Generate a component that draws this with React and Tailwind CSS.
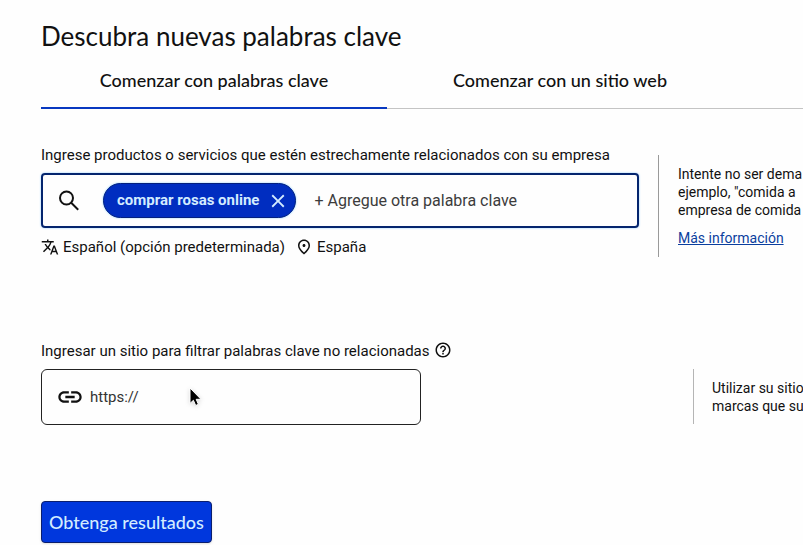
import { useState } from 'react';
import {
    MdClose,
    MdHelpOutline,
    MdLink,
    MdOutlinePlace,
    MdTranslate
} from 'react-icons/md';

const tabs = [
    { id: 'keywords', label: 'Comenzar con palabras clave' },
    { id: 'website', label: 'Comenzar con un sitio web' },
];

const SearchIcon = ({ className }) => (
    <svg viewBox="0 0 24 24" fill="none" stroke="currentColor" strokeWidth="2" aria-hidden="true" className={className}>
        <circle cx="9.5" cy="9" r="6.5" />
        <path d="M14.2 13.7l7 7" />
    </svg>
);

const Tabs = ({ active, onChange }) => (
    <div role="tablist" className="flex border-b border-[#c4c4c4] pr-[70px] font-['Lato',sans-serif]">
        {tabs.map((tab) => (
            <button
                key={tab.id}
                type="button"
                role="tab"
                aria-selected={active === tab.id}
                onClick={() => onChange(tab.id)}
                className={`-mb-px h-14 flex-1 border-b-2 text-lg leading-6 font-medium whitespace-nowrap ${
                    active === tab.id ? 'border-[#0838c0]' : 'border-transparent'
                }`}
            >
                {tab.label}
            </button>
        ))}
    </div>
);

const KeywordField = () => {
    const [keywords, setKeywords] = useState(['comprar rosas online']);

    const removeKeyword = (keyword) => {
        setKeywords(keywords.filter((item) => item !== keyword));
    };

    return (
        <div className="min-w-0 flex-1">
            <label htmlFor="keywords" className="block text-[15px] leading-5 whitespace-nowrap">
                Ingrese productos o servicios que estén estrechamente relacionados con su empresa
            </label>
            <div className="mt-2 flex h-[55px] items-center rounded border-2 border-[#04256e] pr-3 pl-[14px] shadow-[0_0_2px_#7cc4ff]">
                <SearchIcon className="h-6 w-6 shrink-0" />
                <div className="ml-[22px] flex shrink-0 gap-2">
                    {keywords.map((keyword) => (
                        <span
                            key={keyword}
                            className="flex h-[35px] items-center rounded-full border border-[#04207e] bg-[#002dc0] pr-1.5 pl-[13px] text-[15px] font-bold text-[#d3ecff] shadow-[0_0_2px_#7cc4ff]"
                        >
                            {keyword}
                            <button
                                type="button"
                                aria-label={`Quitar ${keyword}`}
                                onClick={() => removeKeyword(keyword)}
                                className="ml-2"
                            >
                                <MdClose className="h-[22px] w-[22px]" />
                            </button>
                        </span>
                    ))}
                </div>
                <input
                    id="keywords"
                    type="text"
                    placeholder="+ Agregue otra palabra clave"
                    className="ml-[18px] h-9 min-w-0 flex-1 bg-transparent text-base outline-none placeholder:text-[#3c3c3c]"
                />
            </div>
            <div className="mt-[9px] flex items-center text-[15px] leading-5">
                <MdTranslate className="mr-1 h-[18px] w-[18px]" />
                <span>Español (opción predeterminada)</span>
                <MdOutlinePlace className="mr-1 ml-2.5 h-[18px] w-[18px]" />
                <span>España</span>
            </div>
        </div>
    );
};

const SiteField = () => (
    <div className="min-w-0 flex-1">
        <div className="flex items-start gap-1">
            <label htmlFor="site" className="text-[15px] leading-5 whitespace-nowrap">
                Ingresar un sitio para filtrar palabras clave no relacionadas
            </label>
            <button type="button" aria-label="Ayuda">
                <MdHelpOutline className="h-[18px] w-[18px]" />
            </button>
        </div>
        <div className="relative mt-2 flex h-14 max-w-[380px] items-center rounded-md border border-[#222] pr-4 pl-[14px]">
            <MdLink className="mr-1.5 h-7 w-7 shrink-0" />
            <input
                id="site"
                type="text"
                placeholder="https://"
                className="h-9 min-w-0 flex-1 bg-transparent text-[15px] outline-none placeholder:text-[#333]"
            />
            <svg
                viewBox="0 0 12 19"
                aria-hidden="true"
                className="pointer-events-none absolute top-[18px] left-[147px] h-[19px] w-3 overflow-visible drop-shadow-sm"
            >
                <path
                    d="M1 0v15.4l3.4-3.1 2.3 5.2 2.7-1.2-2.2-5H12z"
                    fill="#000"
                    stroke="#fff"
                    strokeWidth="1"
                />
            </svg>
        </div>
    </div>
);

const App = () => {
    const [activeTab, setActiveTab] = useState('keywords');

    return (
        <main className="min-h-screen overflow-hidden bg-[#fefefe] pt-5 pl-[41px] font-['Roboto',sans-serif] text-[#111]">
            <h1 className="mb-px font-['Lato',sans-serif] text-[26px] leading-8">Descubra nuevas palabras clave</h1>

            <Tabs active={activeTab} onChange={setActiveTab} />

            <form onSubmit={(e) => e.preventDefault()}>
                <section className="mt-9 flex gap-[19px]">
                    <KeywordField />
                    <aside className="mt-2.5 h-[102px] w-[145px] shrink-0 border-l border-[#9a9a9a] pt-2.5 pl-[19px] text-sm leading-[18px] whitespace-nowrap">
                        <p>
                            Intente no ser dema<br />
                            ejemplo, "comida a<br />
                            empresa de comida
                        </p>
                        <a href="#info" className="mt-2.5 block text-[#0b3f9e] underline">Más información</a>
                    </aside>
                </section>

                <section className="mt-[84px] flex gap-[19px]">
                    <SiteField />
                    <aside className="mt-7 h-[55px] w-[110px] shrink-0 border-l border-[#b5b5b5] pt-2.5 pl-[18px] text-sm leading-[18px] whitespace-nowrap">
                        <p>
                            Utilizar su sitio<br />
                            marcas que su
                        </p>
                    </aside>
                </section>

                <button
                    type="submit"
                    className="mt-[76px] h-[42px] rounded border border-[#0a1e6e] bg-[#0037dd] px-[7px] font-['Lato',sans-serif] text-lg font-medium text-[#d3ecff] shadow-sm"
                >
                    Obtenga resultados
                </button>
            </form>
        </main>
    );
};

export default App;
